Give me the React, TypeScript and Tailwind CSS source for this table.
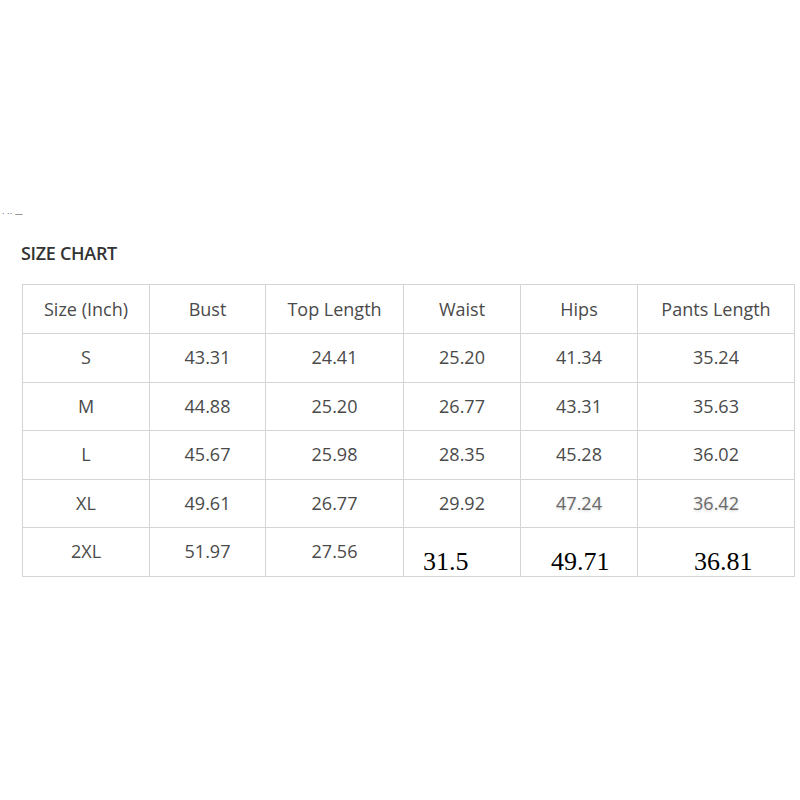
import React from "react";

const headers = ["Size (Inch)", "Bust", "Top Length", "Waist", "Hips", "Pants Length"];
const widths = ["w-[127px]", "w-[116px]", "w-[138px]", "w-[117px]", "w-[117px]", "w-[157px]"];

const rows = [
    ["S", "43.31", "24.41", "25.20", "41.34", "35.24"],
    ["M", "44.88", "25.20", "26.77", "43.31", "35.63"],
    ["L", "45.67", "25.98", "28.35", "45.28", "36.02"],
    ["XL", "49.61", "26.77", "29.92", "47.24", "36.42"],
];

export default function App() {
    return (
        <main className="min-h-[800px] w-[800px] bg-white font-['Open_Sans',sans-serif] text-[#4a4a4a]">
            <div className="pt-[211px] pl-[2px] text-[8px] leading-none text-[#666] font-['DejaVu_Sans',sans-serif]">· ·‧ —</div>

            <section className="pl-[21px] pt-[22px]">
                <h2 className="text-[18px] leading-[24px] font-semibold text-[#333] tracking-[-0.3px]">SIZE CHART</h2>

                <table className="mt-[19px] ml-px border-collapse table-fixed w-[772px]">
                    <colgroup>
                        {widths.map((w, i) => (
                            <col key={i} className={w} />
                        ))}
                    </colgroup>
                    <thead>
                        <tr className="h-[49px]">
                            {headers.map((h) => (
                                <th key={h} className="border border-[#d4d4d4] font-normal text-[18px] text-center p-0">
                                    {h}
                                </th>
                            ))}
                        </tr>
                    </thead>
                    <tbody>
                        {rows.map((r, ri) => (
                            <tr key={ri} className="h-[48.5px]">
                                {r.map((c, ci) => (
                                    <td
                                        key={ci}
                                        className={`border border-[#d4d4d4] text-[18px] text-center p-0 ${ri === 3 && ci >= 4 ? "text-[#6a6a6a] [text-shadow:0_1px_3px_#cfcfcf]" : ""}`}
                                    >
                                        {c}
                                    </td>
                                ))}
                            </tr>
                        ))}
                        <tr className="h-[48.5px]">
                            <td className="border border-[#d4d4d4] text-[18px] text-center p-0">2XL</td>
                            <td className="border border-[#d4d4d4] text-[18px] text-center p-0">51.97</td>
                            <td className="border border-[#d4d4d4] text-[18px] text-center p-0">27.56</td>
                            <td className="border border-[#d4d4d4] p-0 pb-[2px] align-bottom">
                                <div className="pl-[19px] text-left font-['Liberation_Serif',serif] text-[26px] leading-[24px] text-black">31.5</div>
                            </td>
                            <td className="border border-[#d4d4d4] p-0 pb-[2px] align-bottom">
                                <div className="pl-[30px] text-left font-['Liberation_Serif',serif] text-[26px] leading-[24px] text-black">49.71</div>
                            </td>
                            <td className="border border-[#d4d4d4] p-0 pb-[2px] align-bottom">
                                <div className="pl-[56px] text-left font-['Liberation_Serif',serif] text-[26px] leading-[24px] text-black">36.81</div>
                            </td>
                        </tr>
                    </tbody>
                </table>
            </section>
        </main>
    );
}
